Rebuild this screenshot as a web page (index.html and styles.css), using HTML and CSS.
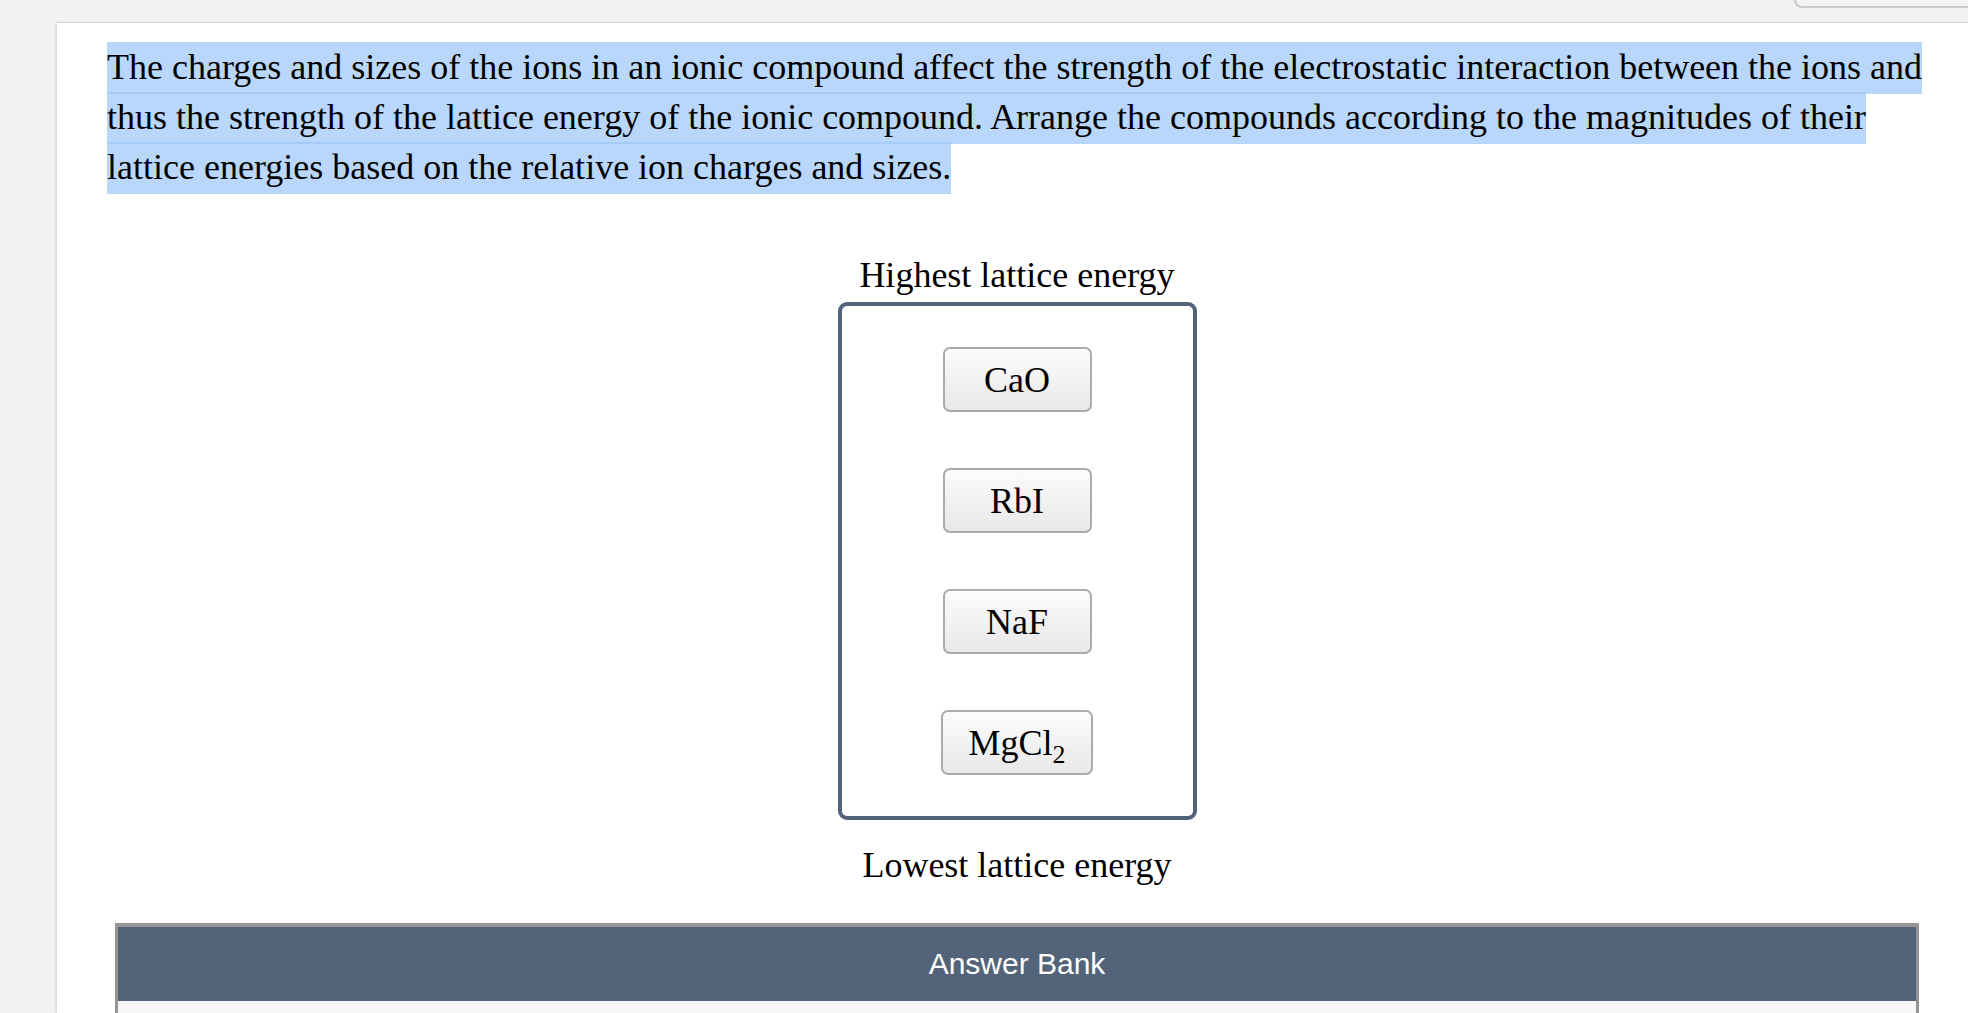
FILE: index.html
```html
<!DOCTYPE html>
<html lang="en">
<head>
<meta charset="utf-8">
<title>Lattice energy ranking</title>
<link rel="stylesheet" href="styles.css">
</head>
<body>
  <div class="topbar">
    <div class="topbtn"></div>
  </div>
  <main class="card">
    <p class="question"><span class="sel">The charges and sizes of the ions in an ionic compound affect the strength of the electrostatic interaction between the ions and thus the strength of the lattice energy of the ionic compound. Arrange the compounds according to the magnitudes of their lattice energies based on the relative ion charges and sizes.</span></p>

    <section class="ranking">
      <div class="rank-label rank-top">Highest lattice energy</div>
      <div class="dropzone">
        <div class="chip"><span class="chip-text">CaO</span></div>
        <div class="chip"><span class="chip-text">RbI</span></div>
        <div class="chip"><span class="chip-text">NaF</span></div>
        <div class="chip"><span class="chip-text">MgCl<sub>2</sub></span></div>
      </div>
      <div class="rank-label rank-bottom">Lowest lattice energy</div>
    </section>

    <section class="bank">
      <div class="bank-head">Answer Bank</div>
      <div class="bank-body"></div>
    </section>
  </main>
</body>
</html>
```

FILE: styles.css
```css
html, body {
  margin: 0;
  padding: 0;
  overflow: hidden;
  background: #f2f2f2;
}

body {
  width: 1968px;
  height: 1013px;
  font-family: "Liberation Serif", "Times New Roman", Times, serif;
  color: #000;
}

.topbar {
  height: 23px;
  display: flex;
  justify-content: flex-end;
}

.topbtn {
  width: 190px;
  height: 26px;
  margin-top: -22px;
  margin-right: -20px;
  border: 2px solid #c9c9c9;
  border-radius: 8px;
  background: #f2f2f2;
}

.card {
  display: block;
  box-sizing: border-box;
  margin-left: 57px;
  width: 1920px;
  height: 990px;
  overflow: hidden;
  padding: 19px 50px 0 50px;
  background: #ffffff;
  box-shadow: -1px 0 3px rgba(0, 0, 0, 0.16), 0 -1px 0 #e3e3e3;
}

.question {
  margin: 0 -20px 0 0;
  font-size: 36px;
  line-height: 50px;
}

.sel {
  background: rgba(157, 198, 248, 0.71);
  padding: 5px 0 7px 0;
  -webkit-box-decoration-break: clone;
  box-decoration-break: clone;
}

.ranking {
  display: flex;
  flex-direction: column;
  align-items: center;
  margin-top: 58px;
}

.rank-label {
  font-size: 36px;
  line-height: 50px;
  height: 50px;
}

.rank-top {
  margin-bottom: 2px;
}

.rank-bottom {
  margin-top: 20px;
}

.dropzone {
  box-sizing: border-box;
  width: 359px;
  height: 518px;
  border: 4px solid #536379;
  border-radius: 9px;
  padding: 41px 0;
  display: flex;
  flex-direction: column;
  align-items: center;
  gap: 56px;
}

.chip {
  box-sizing: border-box;
  min-width: 149px;
  height: 65px;
  padding: 0 26px;
  border: 2px solid #ababab;
  border-radius: 7px;
  background: linear-gradient(#fcfcfc, #e8e8e8);
  display: flex;
  align-items: center;
  justify-content: center;
  font-size: 36px;
  line-height: 1;
  white-space: nowrap;
}

.chip-text {
  display: block;
  line-height: 40px;
}

.chip-text sub {
  font-size: 0.72em;
  line-height: 0;
  vertical-align: -0.3em;
}

.bank {
  margin: 33px 8px 0 8px;
  border: 3px solid #959595;
  border-top-width: 4px;
}

.bank-head {
  height: 74px;
  background: #536379;
  color: #ffffff;
  display: flex;
  align-items: center;
  justify-content: center;
  font-family: "Liberation Sans", Helvetica, Arial, sans-serif;
  font-size: 30px;
}

.bank-body {
  height: 40px;
  background: #f6f6f6;
}
```
